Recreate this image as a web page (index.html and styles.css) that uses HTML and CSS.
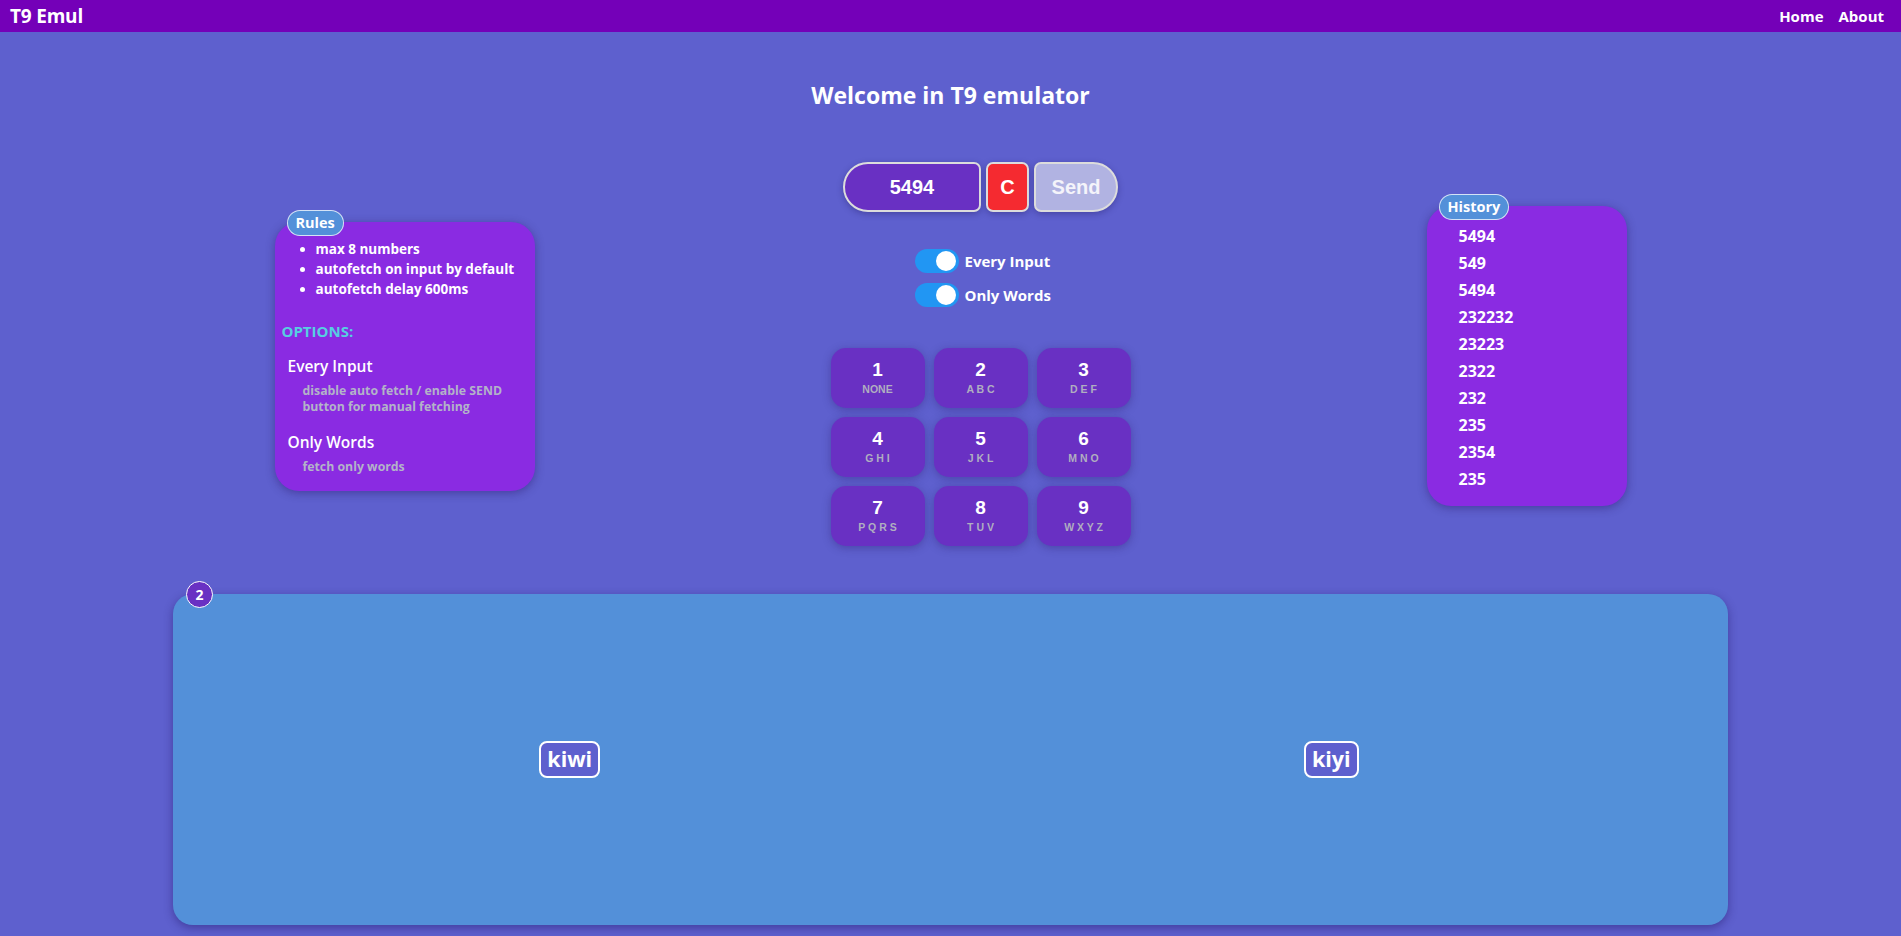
FILE: index.html
```html
<!DOCTYPE html>
<html lang="en">
<head>
<meta charset="utf-8">
<title>T9 Emul</title>
<link rel="stylesheet" href="styles.css">
</head>
<body>
<nav class="navbar">
  <span class="brand">T9 Emul</span>
  <div class="nav-links"><a class="nav-link" href="#">Home</a><a class="nav-link" href="#">About</a></div>
</nav>
<main class="page">
  <h1 class="title">Welcome in T9 emulator</h1>
  <section class="row">
    <aside class="card rules">
      <span class="badge">Rules</span>
      <ul class="rule-list">
        <li>max 8 numbers</li>
        <li>autofetch on input by default</li>
        <li>autofetch delay 600ms</li>
      </ul>
      <h3 class="options">OPTIONS:</h3>
      <div class="opt">
        <h4 class="opt-name">Every Input</h4>
        <p class="opt-desc">disable auto fetch / enable SEND<br>button for manual fetching</p>
      </div>
      <div class="opt">
        <h4 class="opt-name">Only Words</h4>
        <p class="opt-desc">fetch only words</p>
      </div>
    </aside>

    <div class="center">
      <div class="input-row">
        <div class="num-input">5494</div>
        <button class="btn-clear">C</button>
        <button class="btn-send">Send</button>
      </div>
      <div class="toggles">
        <label class="toggle"><span class="switch"><span class="knob"></span></span><span class="toggle-label">Every Input</span></label>
        <label class="toggle"><span class="switch"><span class="knob"></span></span><span class="toggle-label">Only Words</span></label>
      </div>
      <div class="keypad">
        <button class="key"><span class="digit">1</span><span class="letters">NONE</span></button>
        <button class="key"><span class="digit">2</span><span class="letters">A B C</span></button>
        <button class="key"><span class="digit">3</span><span class="letters">D E F</span></button>
        <button class="key"><span class="digit">4</span><span class="letters">G H I</span></button>
        <button class="key"><span class="digit">5</span><span class="letters">J K L</span></button>
        <button class="key"><span class="digit">6</span><span class="letters">M N O</span></button>
        <button class="key"><span class="digit">7</span><span class="letters">P Q R S</span></button>
        <button class="key"><span class="digit">8</span><span class="letters">T U V</span></button>
        <button class="key"><span class="digit">9</span><span class="letters">W X Y Z</span></button>
      </div>
    </div>

    <aside class="card history">
      <span class="badge">History</span>
      <ul class="history-list">
        <li>5494</li>
        <li>549</li>
        <li>5494</li>
        <li>232232</li>
        <li>23223</li>
        <li>2322</li>
        <li>232</li>
        <li>235</li>
        <li>2354</li>
        <li>235</li>
      </ul>
    </aside>
  </section>

  <section class="results">
    <span class="count">2</span>
    <div class="word-cell"><span class="word">kiwi</span></div>
    <div class="word-cell"><span class="word">kiyi</span></div>
  </section>
</main>
</body>
</html>
```

FILE: styles.css
```css
* { box-sizing: border-box; }

html, body {
  margin: 0;
  padding: 0;
}

body {
  background: #5e60ce;
  color: #fff;
  font-family: "Open Sans", "Noto Sans", sans-serif;
}

.navbar {
  height: 32px;
  background: #7400b8;
  display: flex;
  align-items: center;
  justify-content: space-between;
  padding: 0 17px 0 10px;
}

.brand {
  font-weight: 700;
  font-size: 19px;
  letter-spacing: -0.2px;
}

.nav-links {
  display: flex;
  gap: 15px;
}

.nav-link {
  color: #fff;
  text-decoration: none;
  font-weight: 700;
  font-size: 15px;
}

.page {
  display: flex;
  flex-direction: column;
  padding-bottom: 20px;
}

.title {
  margin: 47px 0 0;
  text-align: center;
  font-size: 23px;
  line-height: 32px;
  font-weight: 700;
}

.row {
  margin-top: 51px;
  display: flex;
  justify-content: center;
  align-items: center;
  gap: 296px;
}

.card {
  position: relative;
  background: #8a2be2;
  border-radius: 24px;
  box-shadow: 0 2px 10px rgba(40, 20, 100, 0.45);
}

.badge {
  position: absolute;
  top: -12px;
  left: 12px;
  height: 26px;
  padding: 0 8px;
  border-radius: 13px;
  background: #5390d9;
  border: 1px solid rgba(255, 255, 255, 0.75);
  font-size: 14.5px;
  font-weight: 700;
  line-height: 24px;
}

.rules {
  width: 260px;
  padding: 17px 0 16px 7px;
}

.rule-list {
  margin: 0;
  padding-left: 34px;
  font-size: 13.5px;
  font-weight: 700;
  line-height: 20px;
}

.options {
  margin: 22px 0 0;
  color: #56cfe1;
  font-size: 15px;
  line-height: 20px;
  font-weight: 700;
}

.opt {
  padding-left: 6px;
}

.opt-name {
  margin: 15px 0 0;
  font-size: 15.5px;
  line-height: 20px;
  font-weight: 600;
}

.opt + .opt .opt-name {
  margin-top: 17px;
}

.opt-desc {
  margin: 7px 0 0;
  padding-left: 15px;
  color: #b3b3c8;
  font-size: 12.3px;
  line-height: 16px;
  font-weight: 700;
}

.center {
  width: 300px;
  display: flex;
  flex-direction: column;
  align-items: center;
  padding-bottom: 4px;
}

.input-row {
  display: flex;
  gap: 5px;
}

.num-input,
.btn-clear,
.btn-send {
  height: 50px;
  border: 2px solid #dcdcdc;
  font-family: "Liberation Sans", Arial, sans-serif;
  font-weight: 700;
  font-size: 20px;
  color: #fff;
  display: flex;
  align-items: center;
  justify-content: center;
  box-shadow: 0 2px 6px rgba(30, 20, 90, 0.35);
  padding: 0;
}

.num-input {
  width: 138px;
  background: #6930c3;
  border-radius: 25px 7px 7px 25px;
}

.btn-clear {
  width: 43px;
  background: #f52a30;
  border-radius: 7px;
}

.btn-send {
  width: 84px;
  background: #b1b3e2;
  color: #f4f4fa;
  border-radius: 7px 25px 25px 7px;
}

.toggles {
  margin-top: 37px;
  align-self: flex-start;
  margin-left: 84px;
  display: flex;
  flex-direction: column;
  gap: 10px;
}

.toggle {
  display: flex;
  align-items: center;
  gap: 6px;
}

.switch {
  width: 44px;
  height: 24px;
  border-radius: 12px;
  background: #2196f3;
  display: flex;
  align-items: center;
  justify-content: flex-end;
  padding-right: 3px;
}

.knob {
  width: 20px;
  height: 20px;
  border-radius: 50%;
  background: #fff;
}

.toggle-label {
  font-size: 15px;
  font-weight: 700;
}

.keypad {
  margin-top: 41px;
  display: grid;
  grid-template-columns: repeat(3, 94px);
  grid-auto-rows: 60px;
  gap: 9px;
}

.key {
  background: #6930c3;
  border: none;
  border-radius: 15px;
  box-shadow: 0 2px 8px rgba(40, 20, 100, 0.35);
  display: flex;
  flex-direction: column;
  align-items: center;
  justify-content: center;
  font-family: "Liberation Sans", Arial, sans-serif;
  font-weight: 700;
  padding: 0;
}

.digit {
  color: #fff;
  font-size: 19px;
  line-height: 20px;
}

.letters {
  color: #b0aec0;
  font-size: 10.5px;
  line-height: 14px;
  margin-top: 2px;
}

.history {
  width: 200px;
  padding: 17px 0 13px;
}

.history-list {
  list-style: none;
  margin: 0;
  padding-left: 32px;
  font-size: 16px;
  font-weight: 700;
  line-height: 27px;
}

.results {
  position: relative;
  margin: 44px auto 0;
  width: 1555px;
  height: 331px;
  background: #5390d9;
  border-radius: 20px;
  box-shadow: 0 3px 10px rgba(30, 20, 100, 0.45);
  display: grid;
  grid-template-columns: 1fr 1fr;
  align-items: center;
  padding: 0 16px;
}

.count {
  position: absolute;
  top: -13px;
  left: 13px;
  width: 27px;
  height: 27px;
  border-radius: 50%;
  background: #6930c3;
  border: 1px solid #fff;
  display: flex;
  align-items: center;
  justify-content: center;
  font-size: 14px;
  font-weight: 700;
}

.word-cell {
  display: flex;
  justify-content: center;
}

.word {
  height: 37px;
  padding: 0 6px;
  border: 2px solid #fff;
  border-radius: 8px;
  background: #5e60ce;
  font-size: 21.5px;
  font-weight: 700;
  line-height: 32px;
}
```
